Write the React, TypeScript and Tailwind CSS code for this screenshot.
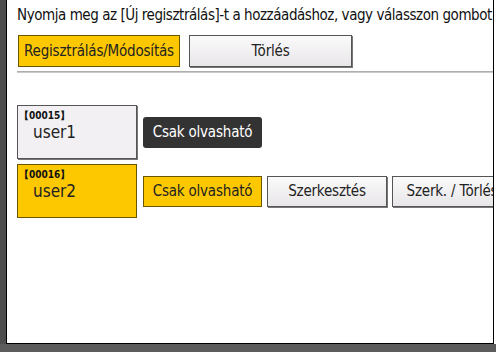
const font = "font-['DejaVu_Sans',sans-serif] [font-stretch:condensed]"

const GrayButton = ({ label, className = '' }: { label: string; className?: string }) => (
  <div
    className={`shrink-0 h-[31px] flex items-center justify-center bg-gradient-to-b from-[#fbfafb] to-[#e8e6e8] border border-[#555] shadow-[1px_1px_0_#777] text-[15px] tracking-[-0.2px] text-[#222] whitespace-nowrap ${className}`}
  >
    {label}
  </div>
)

const UserCard = ({ id, name, active }: { id: string; name: string; active?: boolean }) => (
  <div
    className={`shrink-0 w-[120px] h-[54px] flex flex-col pl-[1px] pt-[4px] border ${
      active ? 'bg-[#fdc800] border-[#6b5600]' : 'bg-[#f2f0f2] border-[#555] shadow-[1px_1px_0_#777]'
    }`}
  >
    <span className="text-[10px] font-bold leading-[12px] text-[#111]">【{id}】</span>
    <span className="pl-[14px] text-[17px] leading-[20px] text-[#222]">{name}</span>
  </div>
)

export default function App() {
  return (
    <div className={`w-[496px] h-[352px] flex flex-col bg-white ${font}`}>
      <div className="flex flex-1 min-h-0">
        <div className="w-[6px] bg-[#4d4d4d]" />
        <div className="flex-1 flex flex-col border-l border-r border-b border-black bg-white overflow-hidden">
          <div className="pl-[10px] pt-[6px] h-[28px] text-[15px] leading-[18px] tracking-[-0.45px] text-[#111] whitespace-nowrap overflow-hidden">
            Nyomja meg az [Új regisztrálás]-t a hozzáadáshoz, vagy válasszon gombot
          </div>
          <div className="flex gap-[9px] pl-[11px] pt-[7px]">
            <div className="shrink-0 w-[162px] h-[32px] flex items-center justify-center bg-[#fdc800] border border-[#6b5600] text-[15px] tracking-[-0.2px] text-[#222]">
              Regisztrálás/Módosítás
            </div>
            <GrayButton label="Törlés" className="w-[163px] h-[32px]" />
          </div>
          <div className="ml-[10px] mt-[4px] h-[2px] bg-gradient-to-b from-[#a0a0a0] to-[#d8d8d8]" />

          <div className="flex flex-col gap-[5px] pl-[10px] pt-[32px]">
            <div className="flex items-center gap-[6px]">
              <UserCard id="00015" name="user1" />
              <div className="shrink-0 w-[119px] h-[31px] flex items-center justify-center rounded-[3px] bg-[#333] text-white text-[15px] tracking-[-0.2px]">
                Csak olvasható
              </div>
            </div>
            <div className="flex items-center gap-[6px]">
              <UserCard id="00016" name="user2" active />
              <div className="flex gap-[5px] shrink-0">
                <div className="shrink-0 w-[119px] h-[31px] flex items-center justify-center bg-[#fdc800] border border-[#6b5600] text-[15px] tracking-[-0.2px] text-[#222]">
                  Csak olvasható
                </div>
                <GrayButton label="Szerkesztés" className="w-[120px]" />
                <GrayButton label="Szerk. / Törlés" className="w-[120px]" />
              </div>
            </div>
          </div>
        </div>
        <div className="w-[2px] bg-white" />
      </div>
      <div className="h-[8px] bg-[#5c5c5c]" />
    </div>
  )
}
